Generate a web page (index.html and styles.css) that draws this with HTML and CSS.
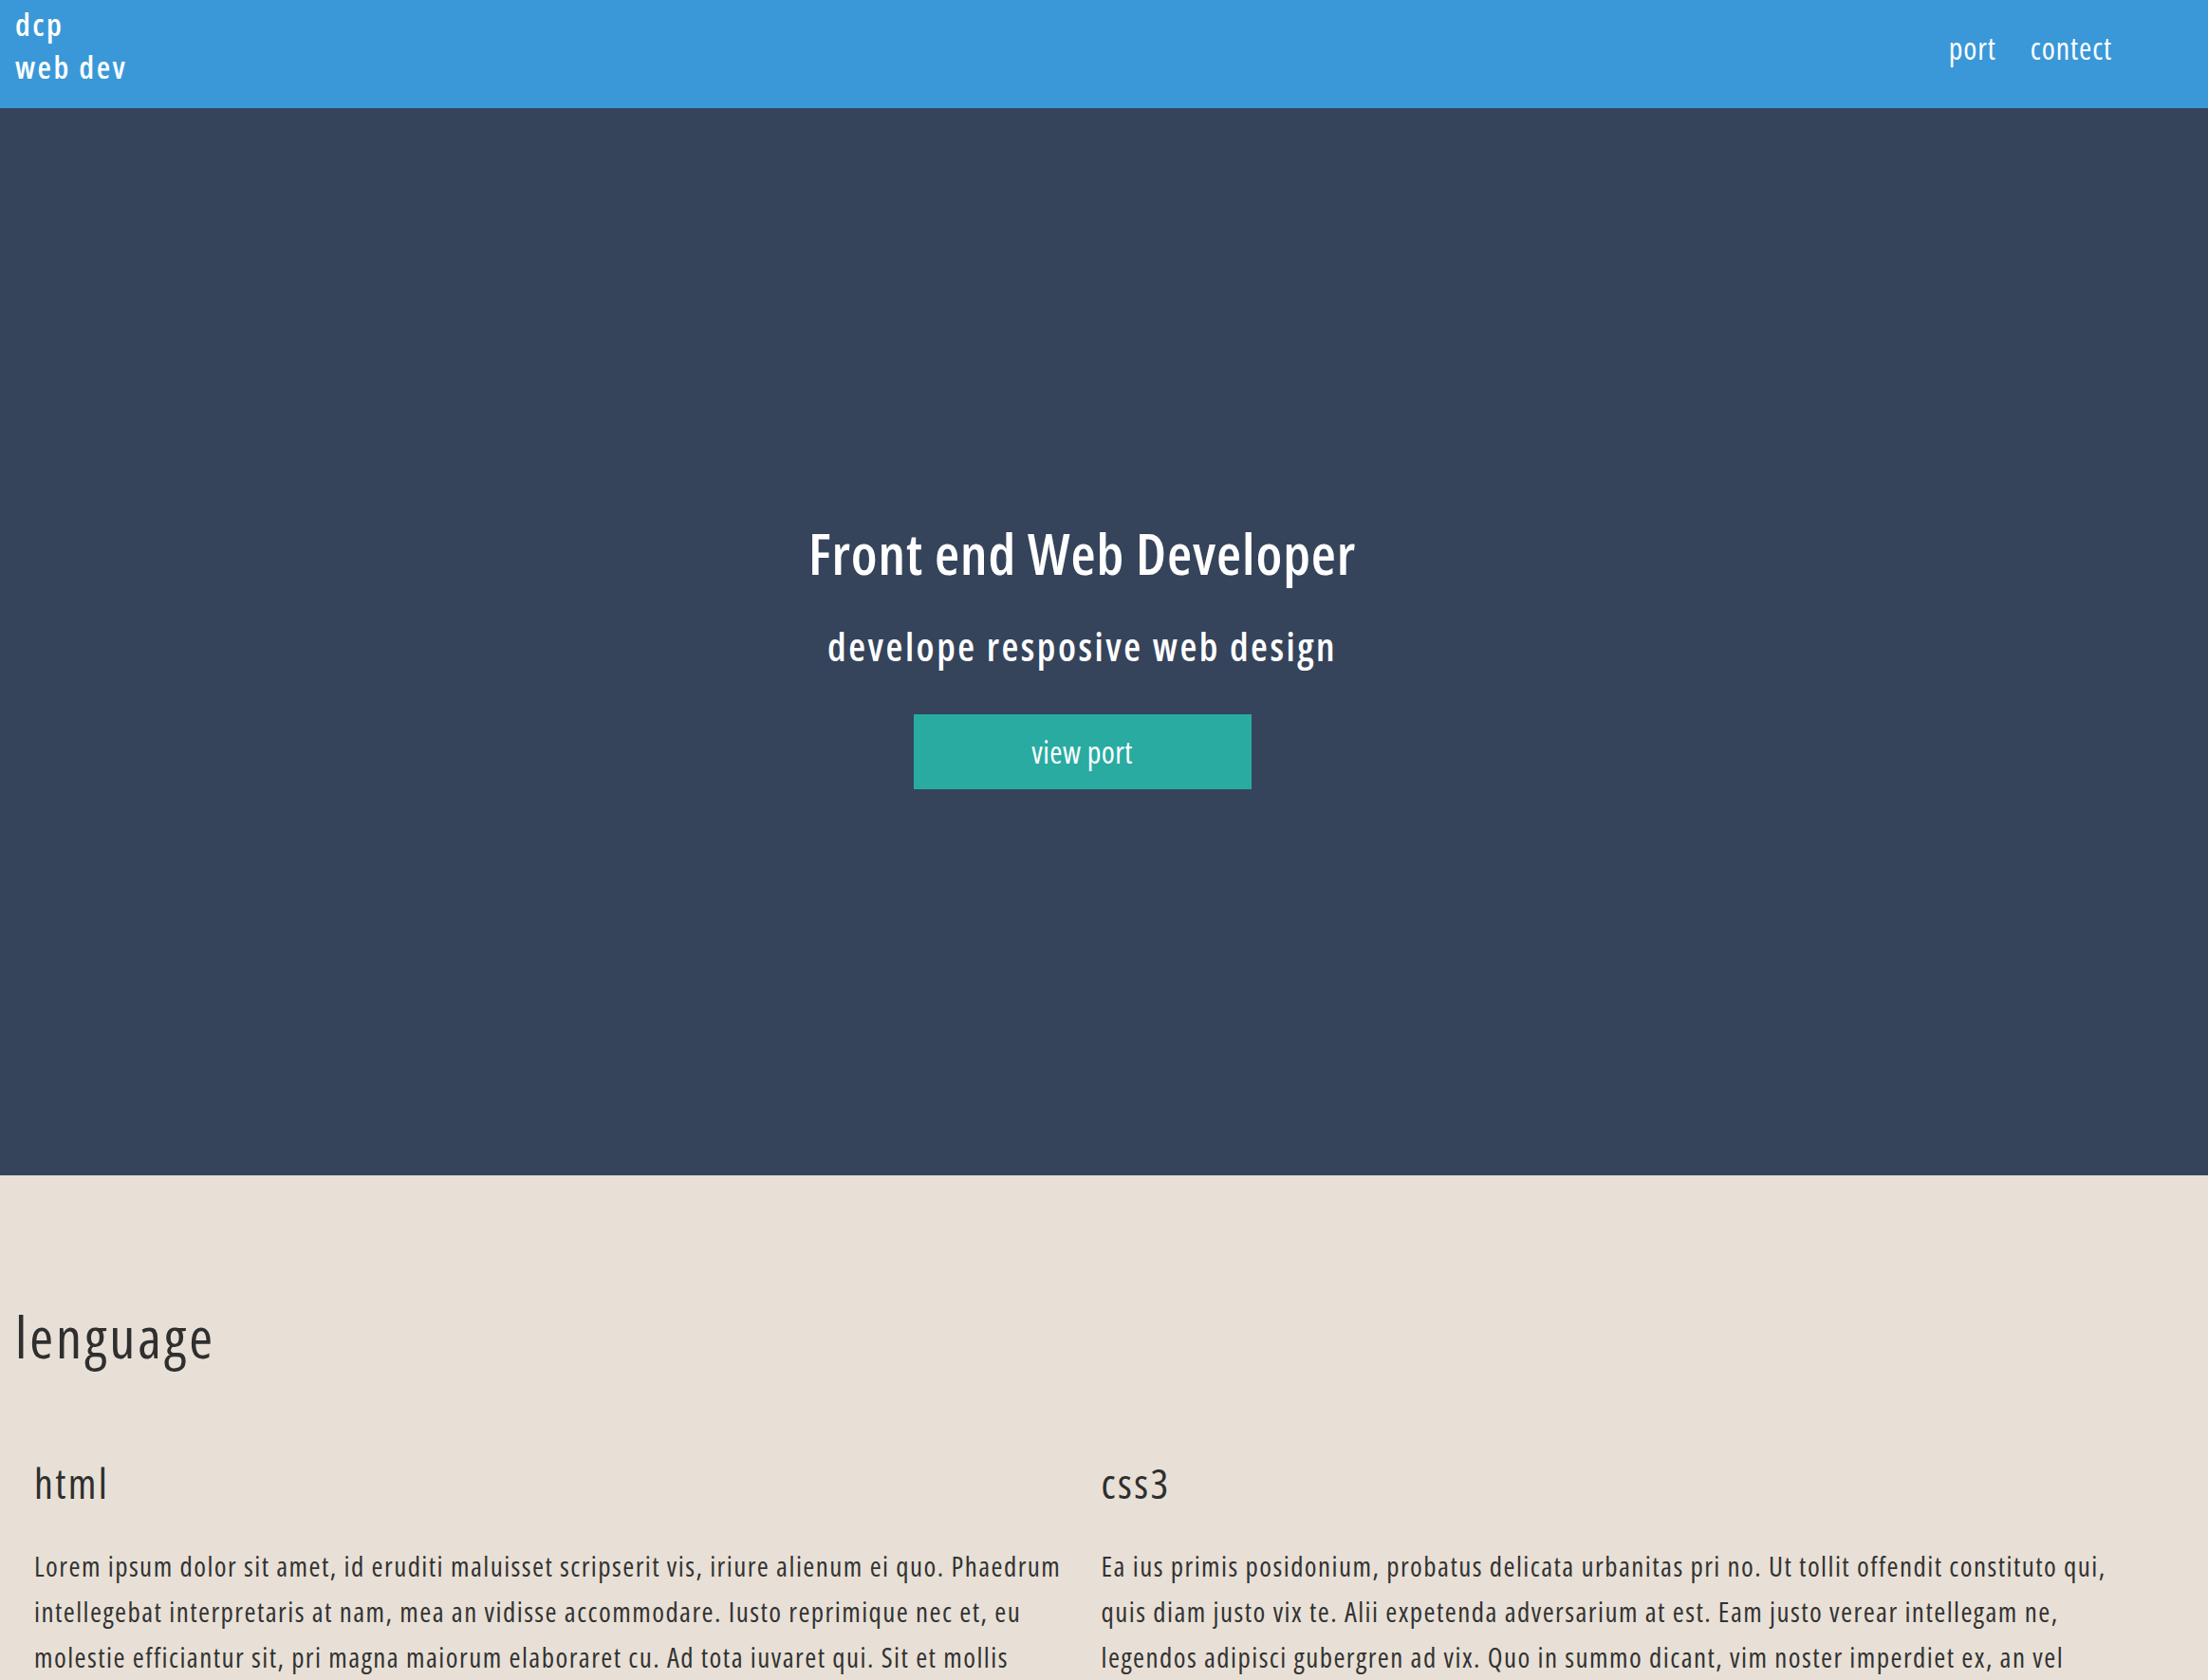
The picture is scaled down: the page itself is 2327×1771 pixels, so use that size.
FILE: index.html
```html
<!DOCTYPE html>
<html lang="en">
<head>
<meta charset="utf-8">
<title>dcp web dev</title>
<link rel="stylesheet" href="styles.css">
</head>
<body>
<header class="site-header">
  <div class="header-inner">
    <a class="logo" href="#">dcp<br>web dev</a>
    <nav class="main-nav">
      <a href="#">port</a>
      <a href="#">contect</a>
    </nav>
  </div>
</header>
<section class="hero">
  <div class="hero-inner">
    <h1 class="hero-title">Front end Web Developer</h1>
    <h2 class="hero-sub">develope resposive web design</h2>
    <a class="btn" href="#">view port</a>
  </div>
</section>
<section class="languages">
  <div class="lang-inner">
    <h2 class="section-title">lenguage</h2>
    <div class="lang-grid">
      <div class="lang-col">
        <h3 class="lang-name">html</h3>
        <p class="lang-text">Lorem ipsum dolor sit amet, id eruditi maluisset scripserit vis, iriure alienum ei quo. Phaedrum intellegebat interpretaris at nam, mea an vidisse accommodare. Iusto reprimique nec et, eu molestie efficiantur sit, pri magna maiorum elaboraret cu. Ad tota iuvaret qui. Sit et mollis omnesque, usu at quot decore.</p>
      </div>
      <div class="lang-col">
        <h3 class="lang-name">css3</h3>
        <p class="lang-text">Ea ius primis posidonium, probatus delicata urbanitas pri no. Ut tollit offendit constituto qui, quis diam justo vix te. Alii expetenda adversarium at est. Eam justo verear intellegam ne, legendos adipisci gubergren ad vix. Quo in summo dicant, vim noster imperdiet ex, an vel graeci nominavi.</p>
      </div>
    </div>
  </div>
</section>
</body>
</html>
```

FILE: styles.css
```css
* { box-sizing: border-box; }

html, body {
  margin: 0;
  padding: 0;
}

body {
  font-family: "Open Sans", "Roboto", sans-serif;
  font-stretch: 75%;
  color: #333333;
  background: #e8e0d6;
}

a { text-decoration: none; color: inherit; }

.site-header {
  background: #3a98d8;
  height: 114px;
  padding: 0 16px;
}

.header-inner {
  width: 98%;
  height: 100%;
  display: flex;
  justify-content: space-between;
  align-items: flex-start;
}

.logo {
  color: #ffffff;
  font-weight: 600;
  font-size: 33px;
  letter-spacing: 2.5px;
  line-height: 45px;
  padding-top: 3px;
}

.main-nav {
  display: flex;
  gap: 36px;
  padding-top: 26px;
  padding-right: 39px;
}

.main-nav a {
  color: #ffffff;
  font-size: 32px;
  letter-spacing: 0.9px;
  line-height: 50px;
}

.hero {
  background: #35445b;
  height: 1125px;
  padding: 26px 16px 0;
}

.hero-inner {
  width: 98%;
  height: 100%;
  display: flex;
  flex-direction: column;
  align-items: center;
  justify-content: center;
  color: #ffffff;
  text-align: center;
}

.hero-title {
  margin: 0;
  font-size: 60px;
  letter-spacing: 0.9px;
  line-height: 72px;
  font-weight: 600;
}

.hero-sub {
  margin: 37px 0 0;
  font-size: 41px;
  letter-spacing: 2.5px;
  line-height: 50px;
  font-weight: 600;
}

.btn {
  margin-top: 47px;
  width: 356px;
  height: 79px;
  background: #29aba2;
  color: #ffffff;
  font-size: 32px;
  letter-spacing: 0.4px;
  line-height: 79px;
  display: block;
}

.languages {
  padding: 0 16px 40px;
}

.lang-inner {
  width: 100%;
}

.section-title {
  margin: 0;
  padding-top: 133px;
  font-size: 60px;
  letter-spacing: 3px;
  line-height: 74px;
  font-weight: 500;
  color: #2f2f2f;
}

.lang-grid {
  display: grid;
  grid-template-columns: 49% 49%;
  margin-top: 90px;
}

.lang-col {
  padding: 0 20px;
}

.lang-name {
  margin: 0;
  font-size: 44px;
  letter-spacing: 2.4px;
  line-height: 54px;
  font-weight: 500;
  color: #2f2f2f;
}

.lang-text {
  margin: 37px 0 0;
  font-size: 29px;
  letter-spacing: 1.45px;
  line-height: 48px;
  color: #333333;
}
```
